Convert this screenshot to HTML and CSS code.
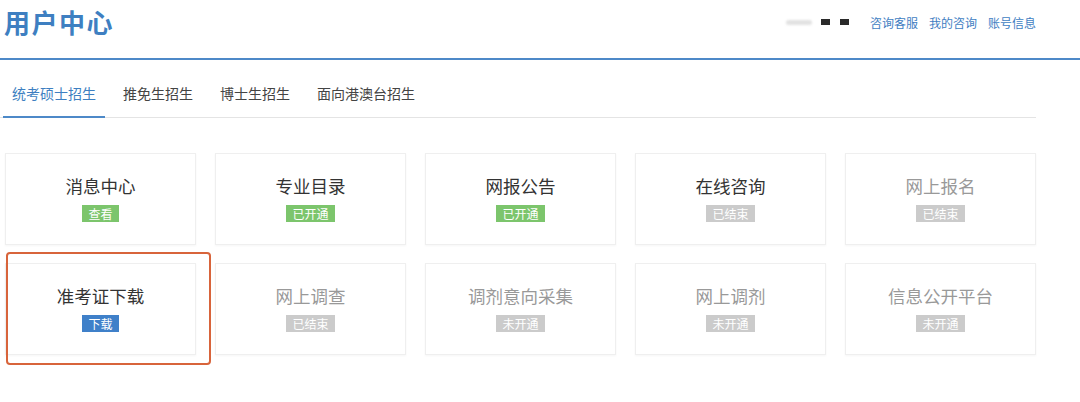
FILE: index.html
```html
<!DOCTYPE html>
<html lang="zh-CN">
<head>
    <meta charset="UTF-8">
    <meta name="viewport" content="width=device-width, initial-scale=1.0">
    <title>用户中心</title>
    <link rel="stylesheet" href="styles.css">
</head>
<body>

<div class="header">
    <div class="header-inner">
        <h1 class="title">用户中心</h1>
        <div class="user-links">
            <span class="user-blur"></span>
            <span class="user-dot"></span>
            <span class="user-dot"></span>
            <a class="user-link" href="#">咨询客服</a>
            <a class="user-link" href="#">我的咨询</a>
            <a class="user-link" href="#">账号信息</a>
        </div>
    </div>
</div>

<div class="main">
    <div class="tabs">
        <div class="tab active">统考硕士招生</div>
        <div class="tab">推免生招生</div>
        <div class="tab">博士生招生</div>
        <div class="tab">面向港澳台招生</div>
    </div>

    <div class="cards">
        <div class="card">
            <div class="card-title">消息中心</div>
            <span class="badge green">查看</span>
        </div>
        <div class="card">
            <div class="card-title">专业目录</div>
            <span class="badge green">已开通</span>
        </div>
        <div class="card">
            <div class="card-title">网报公告</div>
            <span class="badge green">已开通</span>
        </div>
        <div class="card">
            <div class="card-title">在线咨询</div>
            <span class="badge gray">已结束</span>
        </div>
        <div class="card disabled">
            <div class="card-title">网上报名</div>
            <span class="badge gray">已结束</span>
        </div>

        <div class="card highlighted">
            <div class="card-title">准考证下载</div>
            <span class="badge blue">下载</span>
        </div>
        <div class="card disabled">
            <div class="card-title">网上调查</div>
            <span class="badge gray">已结束</span>
        </div>
        <div class="card disabled">
            <div class="card-title">调剂意向采集</div>
            <span class="badge gray">未开通</span>
        </div>
        <div class="card disabled">
            <div class="card-title">网上调剂</div>
            <span class="badge gray">未开通</span>
        </div>
        <div class="card disabled">
            <div class="card-title">信息公开平台</div>
            <span class="badge gray">未开通</span>
        </div>
    </div>
</div>

</body>
</html>
```

FILE: styles.css
```css
body {
    font-family: "Noto Sans CJK SC", "Noto Sans", Arial, sans-serif;
    background-color: #fff;
    color: #333;
    margin: 0;
}
.header {
    height: 58px;
    border-bottom: 2px solid #4d89c8;
}
.header-inner {
    width: 1036px;
    height: 58px;
    display: flex;
    justify-content: space-between;
    align-items: flex-start;
}
.title {
    margin: 5px 0 0 4px;
    font-size: 26px;
    line-height: 34px;
    font-weight: bold;
    color: #3e7fc1;
    letter-spacing: 1.5px;
}
.user-links {
    display: flex;
    align-items: center;
    margin-top: 13px;
    height: 18px;
}
.user-blur {
    width: 26px;
    height: 5px;
    background-color: #e2e2e2;
    border-radius: 3px;
    margin-right: 9px;
    filter: blur(1px);
}
.user-dot {
    width: 9px;
    height: 6px;
    background-color: #2a2a2a;
    margin-right: 10px;
}
.user-dot + .user-dot {
    margin-right: 21px;
}
.user-link {
    font-size: 12px;
    color: #3f7ec2;
    text-decoration: none;
    margin-left: 11px;
}
.user-link:first-of-type {
    margin-left: 0;
}
.main {
    width: 1036px;
    padding-bottom: 40px;
}
.tabs {
    display: flex;
    height: 57px;
    border-bottom: 1px solid #e4e4e4;
    padding-left: 3px;
}
.tab {
    font-size: 14px;
    line-height: 20px;
    padding: 23px 9px 13px;
    margin-right: 9px;
    color: #444;
    border-bottom: 2px solid transparent;
    margin-bottom: -1px;
}
.tab.active {
    color: #3e7fc1;
    border-bottom-color: #4d89c8;
}
.cards {
    display: grid;
    grid-template-columns: repeat(5, 191px);
    grid-auto-rows: 92px;
    gap: 18px 19px;
    padding: 35px 0 0 5px;
}
.card {
    position: relative;
    border: 1px solid #efefef;
    box-shadow: 0 1px 2px rgba(0, 0, 0, 0.04);
    box-sizing: border-box;
    display: flex;
    flex-direction: column;
    align-items: center;
    padding-top: 20px;
}
.card-title {
    font-size: 17.5px;
    line-height: 24px;
    color: #333;
    margin-bottom: 7px;
}
.card.disabled .card-title {
    color: #999;
}
.badge {
    font-size: 12px;
    line-height: 17px;
    padding: 0 6px;
    color: #fff;
}
.badge.green {
    background-color: #7cc56c;
}
.badge.gray {
    background-color: #cbcbcb;
}
.badge.blue {
    background-color: #3f80c9;
}
.card.highlighted::after {
    content: "";
    position: absolute;
    left: 0;
    top: -12px;
    width: 205px;
    height: 113px;
    border: 2px solid #d8643b;
    border-radius: 4px;
    box-sizing: border-box;
}
```
